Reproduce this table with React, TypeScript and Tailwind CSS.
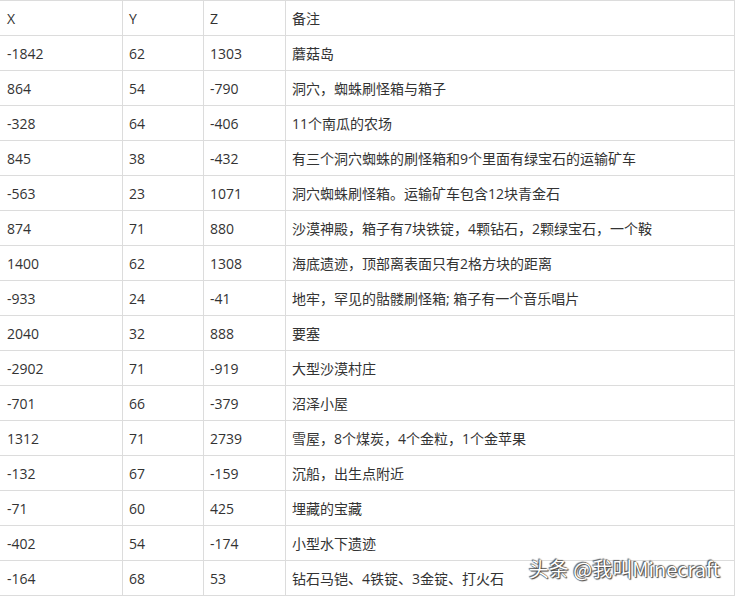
import React from "react";

const rows: [string, string, string, string][] = [
  ["X", "Y", "Z", "备注"],
  ["-1842", "62", "1303", "蘑菇岛"],
  ["864", "54", "-790", "洞穴，蜘蛛刷怪箱与箱子"],
  ["-328", "64", "-406", "11个南瓜的农场"],
  ["845", "38", "-432", "有三个洞穴蜘蛛的刷怪箱和9个里面有绿宝石的运输矿车"],
  ["-563", "23", "1071", "洞穴蜘蛛刷怪箱。运输矿车包含12块青金石"],
  ["874", "71", "880", "沙漠神殿，箱子有7块铁锭，4颗钻石，2颗绿宝石，一个鞍"],
  ["1400", "62", "1308", "海底遗迹，顶部离表面只有2格方块的距离"],
  ["-933", "24", "-41", "地牢，罕见的骷髅刷怪箱; 箱子有一个音乐唱片"],
  ["2040", "32", "888", "要塞"],
  ["-2902", "71", "-919", "大型沙漠村庄"],
  ["-701", "66", "-379", "沼泽小屋"],
  ["1312", "71", "2739", "雪屋，8个煤炭，4个金粒，1个金苹果"],
  ["-132", "67", "-159", "沉船，出生点附近"],
  ["-71", "60", "425", "埋藏的宝藏"],
  ["-402", "54", "-174", "小型水下遗迹"],
  ["-164", "68", "53", "钻石马铠、4铁锭、3金锭、打火石"],
];

export default function App() {
  return (
    <div
      className="relative w-[736px] h-[597px] bg-white text-[14px] text-[#333]"
      style={{ fontFamily: '"Open Sans", "Noto Sans CJK SC", sans-serif' }}
    >
      <div className="w-[735px] border-b border-[#dcdcdc]">
        {rows.map((r, i) => (
          <div
            key={i}
            className="grid grid-cols-[123px_81px_82px_449px] h-[35px] border-t border-[#dcdcdc]"
          >
            <div className="flex items-center pl-[7px] border-r border-[#dcdcdc] whitespace-nowrap">{r[0]}</div>
            <div className="flex items-center pl-[6px] border-r border-[#dcdcdc] whitespace-nowrap">{r[1]}</div>
            <div className="flex items-center pl-[6px] border-r border-[#dcdcdc] whitespace-nowrap">{r[2]}</div>
            <div className="flex items-center pl-[6px] border-r border-[#dcdcdc] whitespace-nowrap">{r[3]}</div>
          </div>
        ))}
      </div>
      <div
        className="absolute right-[16px] top-[556px] text-[20px] leading-[26px] text-white whitespace-nowrap [text-shadow:0_0_1px_#222,1px_1px_1px_#444,-1px_-1px_1px_#666]"
        style={{ fontFamily: '"Noto Sans CJK SC", "Open Sans", sans-serif' }}
      >
        头条 @我叫Minecraft
      </div>
    </div>
  );
}
